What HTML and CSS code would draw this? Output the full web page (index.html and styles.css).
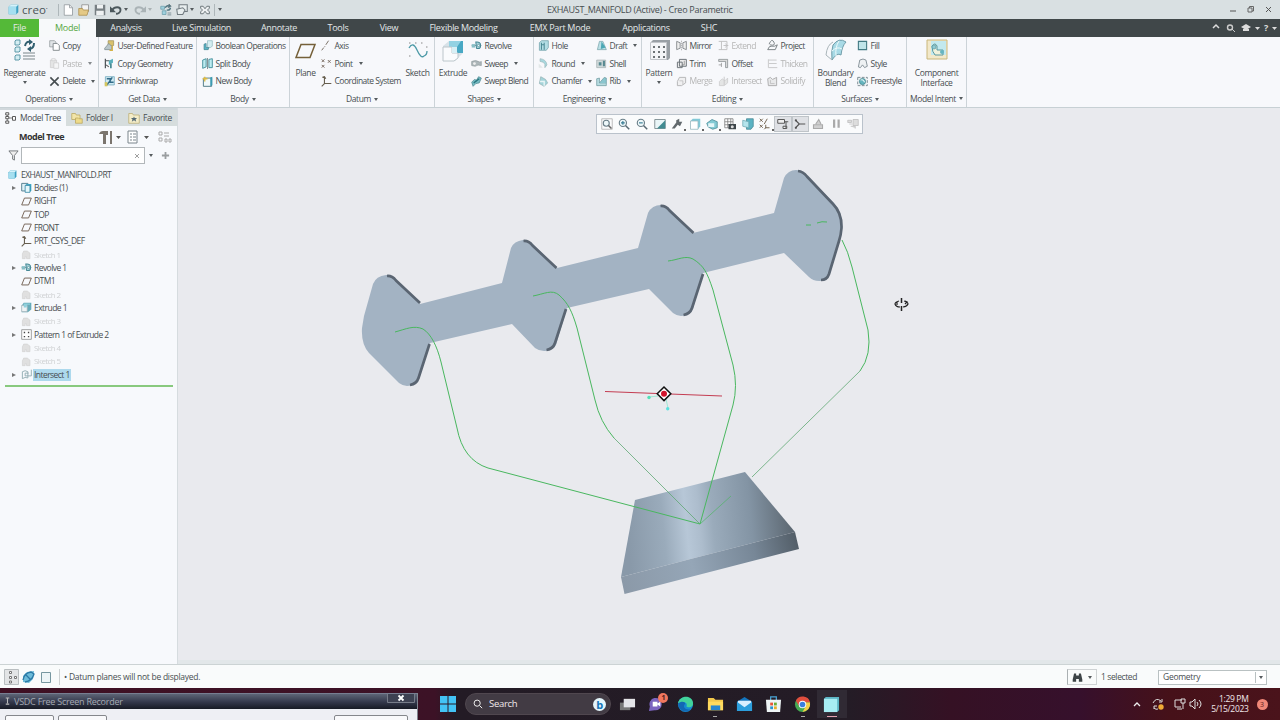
FILE: index.html
```html
<!DOCTYPE html>
<html lang="en">
<head>
<meta charset="utf-8">
<title>EXHAUST_MANIFOLD (Active) - Creo Parametric</title>
<link rel="stylesheet" href="styles.css">
</head>
<body>
<svg class="sprite" aria-hidden="true">
  <symbol id="cube" viewBox="0 0 16 16"><path d="M1 4l3-3h11v11l-3 3H1z" fill="#3c9fc2"/><path d="M1 4h11v11H1z" fill="#a5dff0"/><path d="M1 4l3-3h11l-3 3z" fill="#d5f3fb"/></symbol>
  <symbol id="page" viewBox="0 0 16 16"><path d="M3 1h7l4 4v10H3z" fill="#fff" stroke="#8b9296"/><path d="M10 1v4h4" fill="none" stroke="#8b9296"/></symbol>
  <symbol id="open" viewBox="0 0 16 16"><path d="M5 1h9v9H5z" fill="#f4f4f4" stroke="#888"/><path d="M1 6h5l1 2h7l-2 7H1z" fill="#e4c985" stroke="#a98c4b"/></symbol>
  <symbol id="save" viewBox="0 0 16 16"><path d="M1 1h14v14H1z" fill="#777f83"/><path d="M4 1h8v5H4zM3 9h10v6H3z" fill="#eef1f2"/></symbol>
  <symbol id="undo" viewBox="0 0 16 16"><path d="M3 8c3-5 11-5 11 0 0 3-3 5-6 5" fill="none" stroke="currentColor" stroke-width="2.500"/><path d="M0 3v8h8z" fill="currentColor"/></symbol>
  <symbol id="regensm" viewBox="0 0 16 16"><path d="M1 3h5v4H1zM3 9h5v5H3z" fill="#9fd1de" stroke="#6c9dab"/><path d="M7 5q2-4 6-2M14 5q-1 4-5 3" fill="none" stroke="#4f7480" stroke-width="1.800"/><path d="M12 0l3 3-4 2zM10 12h5M10 14.500h5" fill="#4f7480" stroke="#667b83"/></symbol>
  <symbol id="wins" viewBox="0 0 16 16"><path d="M4 1h11v9H4z" fill="#e8eeef" stroke="#717b80" stroke-width="1.400"/><path d="M1 7l8-2 3 3-3 6H2z" fill="#e8eeef" stroke="#717b80" stroke-width="1.400"/></symbol>
  <symbol id="closew" viewBox="0 0 16 16"><path d="M1 2h4l3 4 3-4h4v3l-3 3 3 3v3h-4l-3-4-3 4H1v-3l3-3-3-3z" fill="#eef1f2" stroke="#606a6e" stroke-width="1.400"/></symbol>
  <symbol id="copy" viewBox="0 0 16 16"><path d="M1 1h7l2 2v7H1z" fill="#e1e5e7" stroke="#8b9194"/><path d="M6 5h6l3 3v7H6z" fill="#fff" stroke="#7d8488" stroke-width="1.300"/></symbol>
  <symbol id="paste" viewBox="0 0 16 16"><path d="M2 3h9v11H2z" fill="#ddd" stroke="#b8b8b8"/><path d="M4 1h5v3H4zM7 7h7v8H7z" fill="#f4f4f4" stroke="#b8b8b8"/></symbol>
  <symbol id="del" viewBox="0 0 16 16"><path d="M2 2l12 12M14 2L2 14" stroke="#464d50" stroke-width="2.300"/></symbol>
  <symbol id="udf" viewBox="0 0 16 16"><path d="M6 1h8v7H6z" fill="#d8c16f" stroke="#9b8c54"/><path d="M1 12l6-7 4 4v5H1z" fill="#b9c6ca" stroke="#77868b"/><path d="M12 8v7H8" fill="none" stroke="#d4b244" stroke-width="2"/></symbol>
  <symbol id="cgeo" viewBox="0 0 16 16"><path d="M2 1v14M2 4h6" stroke="#50575a" stroke-width="1.800"/><path d="M7 4l6-3v6L7 10z" fill="#58aebb"/><path d="M10 8v7" stroke="#478a94" stroke-width="2.500"/><path d="M3 10l4 3" stroke="#555" stroke-width="1.500"/></symbol>
  <symbol id="shrink" viewBox="0 0 16 16"><path d="M2 1h13v12H2z" fill="#d1eaf2" stroke="#5d9db5"/><path d="M4 4h5v5h5M12 2L8 8M4 13l5-6" fill="none" stroke="#326c89" stroke-width="2"/><path d="M1 9h4v6H1z" fill="#d6c65d"/></symbol>
  <symbol id="bool" viewBox="0 0 16 16"><path d="M8 1h7v8l-3 2H8z" fill="#d5eef2" stroke="#8db7bf"/><path d="M3 6l3-1v6h4l-1 3H3z" fill="#5ab6c8" stroke="#45808d"/></symbol>
  <symbol id="split" viewBox="0 0 16 16"><path d="M1 3l5-2v12l-5 2zM10 2l5-1v13h-5z" fill="#bdebf0" stroke="#3b8b98" stroke-width="1.300"/><path d="M8 0v16" stroke="#4f6469"/></symbol>
  <symbol id="newb" viewBox="0 0 16 16"><path d="M2 3h12v12H2z" fill="#f0f8fa" stroke="#45727e" stroke-width="1.300"/><path d="M12 2l3-1v12l-3 2z" fill="#3d9bb1"/><path d="M1 4h7M4 1v7" stroke="#dfbb43" stroke-width="2"/></symbol>
  <symbol id="plane" viewBox="0 0 16 16"><path d="M5 3h10l-4 10H1z" fill="none" stroke="#766456" stroke-width="1.400"/></symbol>
  <symbol id="axis" viewBox="0 0 16 16"><path d="M11 1L7 7M6 9l-1 1M4 11l-3 4" stroke="#6d6256" stroke-width="1.300"/></symbol>
  <symbol id="point" viewBox="0 0 16 16"><path d="M1 2l4 4M5 2L1 6M10 3l4 4M14 3l-4 4M1 10l4 4M5 10l-4 4" stroke="#716256" stroke-width="1.300"/></symbol>
  <symbol id="csys" viewBox="0 0 16 16"><path d="M5 1v10h10M5 11l-4 4M2 2l3-1 2 3" fill="none" stroke="#665e4e" stroke-width="1.600"/></symbol>
  <symbol id="rev" viewBox="0 0 16 16"><path d="M1 8h14" stroke="#65797d" stroke-dasharray="3 1"/><path d="M1 6h5v5H1z" fill="#87bec6"/><path d="M7 3q7-1 7 5t-6 4z" fill="#a7d3da" stroke="#458895" stroke-width="1.500"/><circle cx="11" cy="8" r="1.700" fill="#f0f7f8" stroke="#458895"/></symbol>
  <symbol id="sweep" viewBox="0 0 16 16"><path d="M1 5q6-3 12 1l2-1v6q-5-2-9 1L1 11z" fill="#acb6b9" stroke="#909a9d"/><circle cx="5" cy="8" r="2" fill="#eee"/></symbol>
  <symbol id="swept" viewBox="0 0 16 16"><path d="M1 9l4-4 3 1 3-5 4 2-3 7-5 1-4 4z" fill="#79bdc6" stroke="#48838b"/><path d="M4 10l8-6" stroke="#28767e" stroke-width="2"/></symbol>
  <symbol id="hole" viewBox="0 0 16 16"><path d="M2 4l3-3h10v10l-3 4H2z" fill="#b3dde4" stroke="#679aa3"/><path d="M5 4v10M9 4v10M5 7h4" stroke="#4a8994" stroke-width="1.500"/></symbol>
  <symbol id="round" viewBox="0 0 16 16"><path d="M3 1q9 1 10 9l-3 4V9Q8 5 3 5z" fill="#a7d8df" stroke="#9bb7bb"/><path d="M1 8l6 6H1z" fill="#e2e7e7"/></symbol>
  <symbol id="chamfer" viewBox="0 0 16 16"><path d="M4 1l7 4 3 5-5 5-7-4z" fill="#a4d4da" stroke="#8fadb1"/><path d="M3 8h6v6" stroke="#e8f4f5" fill="none" stroke-width="2"/></symbol>
  <symbol id="draft" viewBox="0 0 16 16"><path d="M5 2h5l5 12H2z" fill="#bce0e6" stroke="#73a0a7"/><path d="M8 2l6 9-7 2z" fill="#4ba7b5"/></symbol>
  <symbol id="shell" viewBox="0 0 16 16"><path d="M1 3h13v11H1z" fill="#d0dadb" stroke="#a0acae"/><path d="M4 6h4v5H4zM10 4h3v8h-3z" fill="#578991"/></symbol>
  <symbol id="rib" viewBox="0 0 16 16"><path d="M1 4l4-1v7h10v4H1z" fill="#b7dce1" stroke="#67949b"/><path d="M5 10l7-8 3 1v7" fill="#8ac6cf" stroke="#67949b"/></symbol>
  <symbol id="mirror" viewBox="0 0 16 16"><path d="M1 2l5 2v8l-5 2zM15 2l-5 2v8l5 2z" fill="#eee" stroke="#8a8f92" stroke-width="1.400"/><path d="M8 1v14" stroke="#999" stroke-dasharray="2 1"/></symbol>
  <symbol id="trim" viewBox="0 0 16 16"><path d="M5 2h10v10H5zM2 6h7v8H2z" fill="#eee" stroke="#6b7378" stroke-width="1.400"/><path d="M12 4v6H9" stroke="#777" fill="none"/></symbol>
  <symbol id="merge" viewBox="0 0 16 16"><path d="M5 2h9v8L8 14H2V8z" fill="#eee" stroke="#999" stroke-width="1.400"/><path d="M5 7h5v5" fill="none" stroke="#999"/></symbol>
  <symbol id="extend" viewBox="0 0 16 16"><path d="M1 2h12v12H1M5 2v12M8 8h7" fill="none" stroke="#aaa" stroke-width="1.400"/><path d="M10 5l4 3-4 3" fill="none" stroke="#aaa"/></symbol>
  <symbol id="offset" viewBox="0 0 16 16"><path d="M1 2h13v12h-3V5H1z" fill="#ddd" stroke="#7a8184"/><path d="M1 10h4M5 7v6" stroke="#888"/></symbol>
  <symbol id="inter" viewBox="0 0 16 16"><path d="M2 8l4-4 4 3 4-4v7l-5 4H2z" fill="#ddd" stroke="#b5b5b5"/><path d="M9 1v12" stroke="#b5b5b5" stroke-width="1.400"/></symbol>
  <symbol id="project" viewBox="0 0 16 16"><path d="M3 6q4-9 7-3t-6 4M1 14q2-6 6-5t8-2l-3 7z" fill="none" stroke="#71797d" stroke-width="1.300"/></symbol>
  <symbol id="thicken" viewBox="0 0 16 16"><path d="M2 2v12h13M2 3h12M3 8h11" fill="none" stroke="#b4b4b4" stroke-width="1.400"/></symbol>
  <symbol id="solid" viewBox="0 0 16 16"><path d="M1 4l4-2 3 3 6-3v12H2z" fill="#e3e3e3" stroke="#888" stroke-width="1.300"/><path d="M5 6v5h6" fill="none" stroke="#999"/></symbol>
  <symbol id="fill" viewBox="0 0 16 16"><path d="M2 2h12v12H2z" fill="#bfe4e9" stroke="#427983" stroke-width="1.600"/></symbol>
  <symbol id="style" viewBox="0 0 16 16"><path d="M2 13l2-10q5-3 9 0l2 9-4 2-3-4-3 4z" fill="#eef1f3" stroke="#7f8b93" stroke-width="1.300"/></symbol>
  <symbol id="free" viewBox="0 0 16 16"><path d="M1 2h14v12H1z" fill="#eef3f4" stroke="#75858c" stroke-width="1.300" stroke-dasharray="4 2"/><circle cx="8" cy="8" r="4.500" fill="#65b5bf" stroke="#387a83"/><path d="M5 6q4-2 6 3" fill="none" stroke="#e8f5f6" stroke-width="1.500"/></symbol>
  <symbol id="bodies" viewBox="0 0 16 16"><path d="M1 2h9v11H1z" fill="#dff1f7" stroke="#547f91" stroke-width="1.400"/><path d="M6 5l2-2h7v9l-2 3H6z" fill="#3fa6c6"/><path d="M6 5h7v10H6z" fill="#e4f7fb" stroke="#277a99"/></symbol>
  <symbol id="ghost" viewBox="0 0 16 16"><path d="M2 7l2-4h5l4 3v8H8v-3H6v3H2z" fill="#e0e0e0" stroke="#d2d2d2"/></symbol>
  <symbol id="extr" viewBox="0 0 16 16"><path d="M4 1h11v10l-5 4H1V5z" fill="#66aab8"/><path d="M1 5h8v9H1z" fill="#eef3f5" stroke="#a5b2b7"/><path d="M4 2h9v2H9l-1 4H4z" fill="#8fd0dc"/></symbol>
  <symbol id="patt" viewBox="0 0 16 16"><path d="M1 1h14v14H1z" fill="#fff" stroke="#777"/><path d="M4 4h2v2H4zM10 4h2v2h-2zM4 10h2v2H4zM10 10h2v2h-2z" fill="#444"/></symbol>
  <symbol id="isect" viewBox="0 0 16 16"><path d="M2 4q4-3 8 0v9q-4-2-8 1zM15 1v9H6V6h5" fill="none" stroke="#8faab0" stroke-width="1.300"/></symbol>
  <symbol id="treei" viewBox="0 0 16 16"><path d="M3 3v10M5 8h5" stroke="#555"/><path d="M1 1h4v3H1zM1 6h4v3H1zM1 12h4v3H1zM10 6h4v5h-4z" fill="#fff" stroke="#555" stroke-width="1.300"/></symbol>
  <symbol id="folder" viewBox="0 0 16 16"><path d="M1 2h5l1 2h5v6H1z" fill="#f2e5a8" stroke="#b9a55c"/><path d="M6 8h4l1 1h4v6H6z" fill="#eedb8a" stroke="#b9a55c"/></symbol>
  <symbol id="fav" viewBox="0 0 16 16"><path d="M1 2h5l1 2h8v11H1z" fill="#f4edc9" stroke="#b9ab72"/><path d="M8 6l1 2h3l-2 2 1 3-3-2-3 2 1-3-2-2h3z" fill="#556a75"/></symbol>
  <symbol id="lens" viewBox="0 0 16 16"><circle cx="6.500" cy="6.500" r="4.800" fill="#eef8fa" stroke="#687d87" stroke-width="1.500"/><path d="M10 10l5 5" stroke="#596a73" stroke-width="2"/></symbol>
  <symbol id="repaint" viewBox="0 0 16 16"><path d="M1 2h14v12H1z" fill="#eaf6f8" stroke="#65777c"/><path d="M15 3v11H4z" fill="#418b91"/></symbol>
  <symbol id="wrench" viewBox="0 0 16 16"><path d="M1 14l6-8 0-3 4-2 0 4 4 0-3 6-3-2-4 5z" fill="#62696d"/></symbol>
  <symbol id="views" viewBox="0 0 16 16"><path d="M1 7l7-5 7 3v8l-6 2-6-3z" fill="#83cad4" stroke="#468692"/><path d="M3 7h8v5H3z" fill="#e4f6f8"/></symbol>
  <symbol id="layers" viewBox="0 0 16 16"><path d="M6 1h9v10l-3 4H6z" fill="#5bb3c3" stroke="#468692"/><path d="M1 3l8 2v8l-8-2z" fill="#b4e4ec" stroke="#6da8b3"/></symbol>
  <symbol id="camera" viewBox="0 0 16 16"><path d="M1 1h11v12H1zM1 5h11M1 9h11M5 1v12M9 1v12" fill="#fff" stroke="#777"/><path d="M6 8h10v7H6z" fill="#3e464a"/><circle cx="11" cy="11.500" r="2" fill="#ddd"/></symbol>
</svg>

<div class="app">
  <header class="title">
    <svg class="logo"><use href="#cube"/></svg><span class="brand">creo<sup>•</sup></span><i class="vsep"></i>
    <div class="quick">
      <svg><use href="#page"/></svg><svg><use href="#open"/></svg><svg><use href="#save"/></svg>
      <svg class="dk"><use href="#undo"/></svg><i class="arr"></i>
      <svg class="redo"><use href="#undo"/></svg><i class="arr dim"></i>
      <svg><use href="#regensm"/></svg><svg><use href="#wins"/></svg><i class="arr"></i><svg class="cl"><use href="#closew"/></svg><i class="vsep"></i><i class="arr"></i>
    </div>
    <span class="caption">EXHAUST_MANIFOLD (Active) - Creo Parametric</span>
    <svg class="winbtns" viewBox="0 0 54 18"><path d="M4 10h6" stroke="#555"/><path d="M22 7h4v4h-4zM23.500 7V5.500h4V10H26" fill="none" stroke="#666"/><path d="M40 6l5 5M45 6l-5 5" stroke="#555"/></svg>
  </header>

  <nav class="tabs">
    <span class="file">File</span><span class="on">Model</span><span>Analysis</span><span>Live Simulation</span><span>Annotate</span><span>Tools</span><span>View</span><span>Flexible Modeling</span><span>EMX Part Mode</span><span>Applications</span><span>SHC</span>
    <svg class="help" viewBox="0 0 76 18"><path d="M9 9l3-3 3 3" fill="none" stroke="#ddd" stroke-width="1.500"/><circle cx="26" cy="8.500" r="2.500" fill="none" stroke="#ccc" stroke-width="1.400"/><path d="M28 10l3 3" stroke="#ccc"/><path d="M37 8l5-3 5 3-5 3z" fill="#ddd"/><path d="M39 10v2h6v-2" fill="#ddd"/><path d="M51 8h5l-2.500 3z" fill="#ddd"/><text x="60" y="12" font-size="9" font-weight="bold" fill="#ddd">?</text><path d="M68 8h5l-2.500 3z" fill="#ddd"/></svg>
  </nav>

  <section class="ribbon">
    <div class="group ops"><div class="cols">
      <div class="big"><svg viewBox="0 0 30 26"><path d="M5 3l1-1h4v4l-1 1H5zM5 10l1-1h4v4l-1 1H5zM5 18l1-1h4v4l-1 1H5z" fill="#d5eef3" stroke="#5f9aa9"/><path d="M13 15h12M13 18h12M13 21h12" stroke="#7b8589"/><path d="M15 8q1-5 5-4M24 5q0 5-4 6" fill="none" stroke="#315f70" stroke-width="2"/><path d="M19 1l4 3-4 3zM21 8v6l-4-3z" fill="#315f70"/></svg><span>Regenerate</span><i class="arr"></i></div>
      <div class="col"><div class="cmd"><svg><use href="#copy"/></svg>Copy</div><div class="cmd off"><svg><use href="#paste"/></svg><b>Paste</b><i class="arr"></i></div><div class="cmd"><svg><use href="#del"/></svg>Delete<i class="arr"></i></div></div>
    </div><div class="label">Operations<i class="arr"></i></div></div>

    <div class="group getd"><div class="cols"><div class="col"><div class="cmd"><svg><use href="#udf"/></svg>User-Defined Feature</div><div class="cmd"><svg><use href="#cgeo"/></svg>Copy Geometry</div><div class="cmd"><svg><use href="#shrink"/></svg>Shrinkwrap</div></div></div><div class="label">Get Data<i class="arr"></i></div></div>

    <div class="group bod"><div class="cols"><div class="col"><div class="cmd"><svg><use href="#bool"/></svg>Boolean Operations</div><div class="cmd"><svg><use href="#split"/></svg>Split Body</div><div class="cmd"><svg><use href="#newb"/></svg>New Body</div></div></div><div class="label">Body<i class="arr"></i></div></div>

    <div class="group dat"><div class="cols">
      <div class="big"><svg viewBox="0 0 30 26"><path d="M10 6.500h14l-5 13H5z" fill="none" stroke="#756039" stroke-width="1.500"/></svg><span>Plane</span></div>
      <div class="col"><div class="cmd"><svg><use href="#axis"/></svg>Axis</div><div class="cmd"><svg><use href="#point"/></svg>Point<i class="arr"></i></div><div class="cmd"><svg><use href="#csys"/></svg>Coordinate System</div></div>
      <div class="big"><svg viewBox="0 0 30 26"><path d="M6 10q4-7 8 2t7 6q3-1 3-5" fill="none" stroke="#4d9aa7" stroke-width="1.300"/><path d="M6 5h1.500M12 5h1.500M18 5h1.500M6 18h1.500M23 9h1.500" stroke="#888"/></svg><span>Sketch</span></div>
    </div><div class="label">Datum<i class="arr"></i></div></div>

    <div class="group shp"><div class="cols">
      <div class="big"><svg viewBox="0 0 30 26"><path d="M5 8l6-5h14v12l-8 8H5z" fill="#d8e2e8"/><path d="M11 3h14v12h-6V9h-8z" fill="#48a8c4"/><path d="M11 3h12l-4 6h-8z" fill="#93d2e3"/><path d="M5 9h9v6h6v5l-4 3H5z" fill="#fafbfd" stroke="#bcc6cb"/><path d="M14 9h5v6h-5z" fill="#d8eff5"/></svg><span>Extrude</span></div>
      <div class="col"><div class="cmd"><svg><use href="#rev"/></svg>Revolve</div><div class="cmd"><svg><use href="#sweep"/></svg>Sweep<i class="arr"></i></div><div class="cmd"><svg><use href="#swept"/></svg>Swept Blend</div></div>
    </div><div class="label">Shapes<i class="arr"></i></div></div>

    <div class="group eng"><div class="cols">
      <div class="col"><div class="cmd"><svg><use href="#hole"/></svg>Hole</div><div class="cmd"><svg><use href="#round"/></svg>Round<i class="arr"></i></div><div class="cmd"><svg><use href="#chamfer"/></svg>Chamfer<i class="arr"></i></div></div>
      <div class="col"><div class="cmd"><svg><use href="#draft"/></svg>Draft<i class="arr"></i></div><div class="cmd"><svg><use href="#shell"/></svg>Shell</div><div class="cmd"><svg><use href="#rib"/></svg>Rib<i class="arr"></i></div></div>
    </div><div class="label">Engineering<i class="arr"></i></div></div>

    <div class="group edi"><div class="cols">
      <div class="big"><svg viewBox="0 0 30 26"><path d="M7 4l2-2h17v18l-2 2H7z" fill="#999fa5"/><path d="M6.500 4.500h16v17h-16z" fill="#f4f5f8" stroke="#c2c5ca"/><path d="M9 8h2v2H9zM14 8h2v2h-2zM19 8h2v2h-2zM9 13h2v2H9zM14 13h2v2h-2zM19 13h2v2h-2zM9 18h2v2H9zM14 18h2v2h-2zM19 18h2v2h-2z" fill="#6d7276"/></svg><span>Pattern</span><i class="arr"></i></div>
      <div class="col"><div class="cmd"><svg><use href="#mirror"/></svg>Mirror</div><div class="cmd"><svg><use href="#trim"/></svg>Trim</div><div class="cmd off"><svg><use href="#merge"/></svg><b>Merge</b></div></div>
      <div class="col"><div class="cmd off"><svg><use href="#extend"/></svg><b>Extend</b></div><div class="cmd"><svg><use href="#offset"/></svg>Offset</div><div class="cmd off"><svg><use href="#inter"/></svg><b>Intersect</b></div></div>
      <div class="col"><div class="cmd"><svg><use href="#project"/></svg>Project</div><div class="cmd off"><svg><use href="#thicken"/></svg><b>Thicken</b></div><div class="cmd off"><svg><use href="#solid"/></svg><b>Solidify</b></div></div>
    </div><div class="label">Editing<i class="arr"></i></div></div>

    <div class="group sur"><div class="cols">
      <div class="big"><svg viewBox="0 0 30 26"><path d="M12 7q6-8 13-3-4 4-5 13-4-3-9 5-1-9 1-15z" fill="#a8dae6" stroke="#719eaa"/><path d="M18 3q-4 6-3 15M11 13q5-5 10-2" stroke="#eefafb" fill="none"/><path d="M12 4q-6 3-7 13M5 17l6 5" fill="none" stroke="#aab5ba"/></svg><span>Boundary<br>Blend</span></div>
      <div class="col"><div class="cmd"><svg><use href="#fill"/></svg>Fill</div><div class="cmd"><svg><use href="#style"/></svg>Style</div><div class="cmd"><svg><use href="#free"/></svg>Freestyle</div></div>
    </div><div class="label">Surfaces<i class="arr"></i></div></div>

    <div class="group mod"><div class="cols">
      <div class="big"><svg viewBox="0 0 30 26"><path d="M5 2h20v19H5z" fill="#f2e8c9" stroke="#c9b67a"/><path d="M9 3h15v14H9z" fill="#c3e9ee"/><path d="M10 8q3-4 5 0v4h6v5h-8q-3-3-3-9z" fill="#f0f1db" stroke="#5898a0"/><circle cx="12" cy="9" r="2" fill="#8ecbd3" stroke="#5898a0" stroke-width=".7"/><circle cx="20" cy="14" r="2" fill="#65b5c2"/></svg><span>Component<br>Interface</span></div>
    </div><div class="label">Model Intent<i class="arr"></i></div></div>
  </section>

  <main class="work">
    <aside class="side">
      <div class="sidetabs"><span class="on"><svg><use href="#treei"/></svg>Model Tree</span><span><svg><use href="#folder"/></svg>Folder I</span><span><svg><use href="#fav"/></svg>Favorite</span></div>
      <div class="treehead"><strong>Model Tree</strong>
        <svg viewBox="0 0 76 16"><path d="M0 5q1-3 4-3h5v4H7v9H4V5zM11 2h2v13h-2z" fill="#7b756e"/><path d="M17 7h5l-2.500 3zM45 7h5l-2.500 3z" fill="#555"/><path d="M29 2h9v12h-9zM31 5h2M34 5h3M31 8h2M34 8h3M31 11h2M34 11h3" fill="#fff" stroke="#7b858c"/><path d="M60 3h3v3h-3zM60 9h3v3h-3zM65 4h5M65 7h5M66 10h2v3h-2zM70 10h2v3h-2z" fill="none" stroke="#aaa"/></svg>
      </div>
      <div class="filter"><svg viewBox="0 0 12 12"><path d="M1 1h10L7 6v5l-2-1V6z" fill="#eee" stroke="#6f7477"/></svg><div class="input"><svg viewBox="0 0 6 6"><path d="M1 1l4 4M5 1L1 5" stroke="#888" stroke-width=".8"/></svg></div><i class="arr"></i><svg class="plus" viewBox="0 0 10 10"><path d="M5 1v8M1 5h8" stroke="#9a9ea0" stroke-width="2"/></svg></div>
      <ul class="tree">
        <li class="root"><svg><use href="#cube"/></svg><span>EXHAUST_MANIFOLD.PRT</span></li>
        <li class="exp"><svg><use href="#bodies"/></svg><span>Bodies (1)</span></li>
        <li><svg><use href="#plane"/></svg><span>RIGHT</span></li>
        <li><svg><use href="#plane"/></svg><span>TOP</span></li>
        <li><svg><use href="#plane"/></svg><span>FRONT</span></li>
        <li><svg><use href="#csys"/></svg><span>PRT_CSYS_DEF</span></li>
        <li class="gone"><svg><use href="#ghost"/></svg><span>Sketch 1</span></li>
        <li class="exp"><svg><use href="#rev"/></svg><span>Revolve 1</span></li>
        <li><svg><use href="#plane"/></svg><span>DTM1</span></li>
        <li class="gone"><svg><use href="#ghost"/></svg><span>Sketch 2</span></li>
        <li class="exp"><svg><use href="#extr"/></svg><span>Extrude 1</span></li>
        <li class="gone"><svg><use href="#ghost"/></svg><span>Sketch 3</span></li>
        <li class="exp"><svg><use href="#patt"/></svg><span>Pattern 1 of Extrude 2</span></li>
        <li class="gone"><svg><use href="#ghost"/></svg><span>Sketch 4</span></li>
        <li class="gone"><svg><use href="#ghost"/></svg><span>Sketch 5</span></li>
        <li class="exp sel"><svg><use href="#isect"/></svg><span>Intersect 1</span></li>
      </ul>
      <div class="insert"></div>
    </aside>

    <section class="view">
      <svg class="scene" viewBox="178 108 1102 556">
        <defs>
          <linearGradient id="cone" gradientUnits="userSpaceOnUse" x1="627" y1="530" x2="792" y2="514"><stop offset="0" stop-color="#8999a9"/><stop offset=".22" stop-color="#9aabbb"/><stop offset=".36" stop-color="#b7c7d7"/><stop offset=".44" stop-color="#adbdcd"/><stop offset=".52" stop-color="#9aabbb"/><stop offset=".75" stop-color="#8394a4"/><stop offset="1" stop-color="#5c6771"/></linearGradient>
          <linearGradient id="rim" gradientUnits="userSpaceOnUse" x1="622" y1="585" x2="798" y2="540"><stop offset="0" stop-color="#8b99a8"/><stop offset=".4" stop-color="#95a6b7"/><stop offset=".75" stop-color="#778797"/><stop offset="1" stop-color="#525d67"/></linearGradient>
          <g id="edge"><path d="M387 276Q392 275.500 396 280.500L420 303"/><path d="M429.500 344L418.500 378Q416.500 384 410 385"/></g>
        </defs>
        <path fill="#a3b3c3" d="M362 328L364 316 373 284Q376 276 386 275 391 275 395 279L420 304 502 283 511 248Q514 241 523 240 529 240 533 244L557 268 638 248 648 213Q652 205 661 205 666 205 670 209L693 233 774 213 784 178Q788 170 796 170 801 170 805 174L834 203Q842 212 842 224 842 231 840 238L829 275Q827 281 819 281 813 281 809 277L784 253 703 273 693 309Q690 316 681 316 677 316 673 313L649 289 567 308 556 345Q553 351 544 351 539 351 535 348L512 324 430 343 419 379Q416 386 407 386 403 386 399 383L369 353Q361 344 362 328Z"/>
        <g fill="none" stroke="#5a6572" stroke-width="2.700"><use href="#edge"/><use href="#edge" x="136.500" y="-35"/><use href="#edge" x="273.500" y="-70"/><path d="M798 171Q803 171.500 807 176.500L833 204Q842 213 841.500 228 841 235 839 241L829 274Q827 280 821 280"/></g>
        <path d="M635 500L745 472 795 532 621 577Z" fill="url(#cone)"/>
        <path d="M621 577L795 532 799 549 624.500 594Z" fill="url(#rim)"/>
        <g fill="none" stroke="#49b75f" stroke-width="1">
          <path d="M395 332C406 329 414 325 423 329 431 334 437 346 441 362L457 428Q463 460 488 468L700 524"/>
          <path d="M533 296C544 294 552 289 559 295 568 303 572 311 577 328L595 400Q600 422 614 438"/>
          <path d="M614 438L700 524" stroke="#5fa873" stroke-width=".8"/>
          <path d="M668 261C678 260 685 255 693 259 704 266 707 272 713 290L733 365Q738 386 733 405L700 524"/>
          <path d="M806 225h5M817 223q5-2 10-1M842 240Q848 251 852 267L868 330Q872 355 860 371"/>
          <path d="M860 371L752 477" stroke="#5fa873" stroke-width=".8"/>
          <path d="M731 496L700 524" stroke-opacity=".65"/>
        </g>
        <path d="M605 391.500L722 396" stroke="#c43d52"/>
        <path d="M658 396l-9 1M666 399l2 9" stroke="#a1e8d5"/><circle cx="649" cy="397.500" r="1.700" fill="#55dfb6"/><circle cx="667.700" cy="408.700" r="1.700" fill="#5de2df"/>
        <path d="M664 387l6.800 6.800-6.800 6.800-6.800-6.800z" fill="#fff" stroke="#111" stroke-width="1.500"/><circle cx="664" cy="393.800" r="3" fill="#d2142c"/>
        <g fill="none" stroke="#222" stroke-width="1.200"><path d="M901.500 298v5M901.500 306v5" stroke-width="1.500"/><path d="M899 301q-4 1-4 3 1 3 5 3M904 301q4 1 4 3-1 2.500-5 3M897 302v3M905 304l2-2-2-1"/></g>
      </svg>
      <div class="viewbar">
        <span><svg viewBox="0 0 16 16"><path d="M1 1h14v14H1z" fill="none" stroke="#aaa"/><circle cx="7" cy="7" r="4" fill="#eef8fa" stroke="#687d87" stroke-width="1.500"/><path d="M10 10l4 4" stroke="#666" stroke-width="2"/></svg></span>
        <span><svg viewBox="0 0 16 16"><use href="#lens"/><path d="M4 6.500h5M6.500 4v5" stroke="#367a92" stroke-width="1.500"/></svg></span>
        <span><svg viewBox="0 0 16 16"><use href="#lens"/><path d="M4 6.500h5" stroke="#367a92" stroke-width="1.500"/></svg></span>
        <span><svg><use href="#repaint"/></svg></span><span class="more"><svg><use href="#wrench"/></svg></span>
        <span class="more"><svg viewBox="0 0 16 16"><path d="M2 4l3-3h10v10l-3 4H2z" fill="#82c9d7"/><path d="M2 4h10v11H2z" fill="#fff" stroke="#9cb7be"/></svg></span><span class="more"><svg><use href="#views"/></svg></span><span><svg><use href="#camera"/></svg></span><span><svg><use href="#layers"/></svg></span>
        <span class="more"><svg viewBox="0 0 16 16"><path d="M1 1l4 4M5 1L1 5M11 1L7 8M8 13h6M9 9v4l-2 2M1 9l4 4M5 9l-4 4" fill="none" stroke="#756653" stroke-width="1.300"/></svg></span>
        <span class="down"><svg viewBox="0 0 16 16"><path d="M1 2h9v5H1zM10 5h5M12 5v9M8 11h5v3H8z" fill="#eee" stroke="#555" stroke-width="1.300"/></svg></span>
        <span class="down"><svg viewBox="0 0 16 16"><path d="M2 3l5 5h8M7 8l-5 5" fill="none" stroke="#555" stroke-width="1.500"/><circle cx="2.500" cy="3" r="1.500" fill="#555"/><circle cx="2.500" cy="13" r="1.500" fill="#555"/></svg></span>
        <span><svg viewBox="0 0 16 16"><path d="M2 9h12v5H2zM5 8l4-6 3 6" fill="#d0d0d0" stroke="#aaa" stroke-width="1.500"/></svg></span>
        <span><svg viewBox="0 0 16 16"><path d="M4 2h3v11H4zM10 2h3v11h-3z" fill="#aaa"/></svg></span>
        <span><svg viewBox="0 0 16 16"><path d="M1 3h5v3H1zM8 2h7v8H8zM3 8h4M5 11h6v3" fill="#ddd" stroke="#bbb"/></svg></span>
      </div>
    </section>
  </main>

  <footer class="status">
    <svg class="sicons" viewBox="0 0 60 24"><path d="M4.500 4.500h14v15h-14z" fill="#e3e5e6" stroke="#b9bec0"/><path d="M9.500 6.500h2v2h-2zM9.500 11.500h2v2h-2zM9.500 16h2v2h-2zM14.500 11.500h2v2h-2z" fill="#fff" stroke="#777"/><path d="M23 11l4-4 7-1-1 8-4 4-6-1z" fill="#6cbbd9"/><path d="M23 15q1-7 8-8l3 2q-2 7-9 8M25 9l6 6" fill="none" stroke="#2b79a5" stroke-width="1.300"/><path d="M41.500 7.500h9v10h-9z" fill="#edf5f7" stroke="#7797a0"/><path d="M59.500 4v16" stroke="#cdd1d2"/></svg>
    <span class="message">•&nbsp;Datum planes will not be displayed.</span>
    <div class="finder"><svg viewBox="0 0 16 16"><path d="M3 2h3v3h4V2h3l2 9v3h-5v-4H6v4H1v-3z" fill="#3d4447"/></svg><i class="arr"></i></div>
    <span class="selected">1 selected</span>
    <div class="select"><span>Geometry</span><div class="drop"><i class="arr"></i></div></div>
  </footer>

  <div class="taskbar">
    <svg class="start" viewBox="0 0 16 16"><path d="M0 0h7.500v7.500H0zM8.500 0H16v7.500H8.500zM0 8.500h7.500V16H0zM8.500 8.500H16V16H8.500z" fill="#43c3f5"/></svg>
    <div class="search"><svg viewBox="0 0 12 12"><circle cx="5" cy="5" r="3.700" fill="none" stroke="#eee" stroke-width="1.200"/><path d="M8 8l3 3" stroke="#eee" stroke-width="1.200"/></svg><span>Search</span><em>b</em></div>
    <div class="apps">
      <span><svg viewBox="0 0 18 18"><path d="M1 7h11v8H1z" fill="#777"/><path d="M5 3h12v9H5z" fill="#e4e4e8"/></svg></span>
      <span class="chat"><svg viewBox="0 0 18 18"><path d="M1 16l1-5a6.500 6.500 0 1 1 5 4z" fill="#7c64bf"/><path d="M5 6h5v5H5zM10 8l3-2v5l-3-2z" fill="#fff"/></svg><b>1</b></span>
      <span><svg viewBox="0 0 18 18"><circle cx="9" cy="9" r="8" fill="#168bd1"/><path d="M1 8C3-2 17-1 17 8c0 4-4 5-7 3 2-5-5-6-9-3z" fill="#42d39b"/><path d="M1 8c5-4 9-1 7 1-2 3 1 6 6 5-4 5-12 2-13-6z" fill="#1268b4"/></svg></span>
      <span class="run"><svg viewBox="0 0 18 18"><path d="M1 2h6l2 2h8v11H1z" fill="#f3c84b"/><path d="M1 6h16v9H1z" fill="#ffda5e"/><path d="M4 10h10v5H4z" fill="#2786cf"/></svg></span>
      <span><svg viewBox="0 0 18 18"><path d="M1 6l8-5 8 5v10H1z" fill="#1475bd"/><path d="M2 5h14v8H2z" fill="#d8efff"/><path d="M1 6l8 6 8-6v10H1z" fill="#2c9edc"/></svg></span>
      <span><svg viewBox="0 0 18 18"><path d="M6 5V1h6v4" fill="none" stroke="#4aa6d8" stroke-width="1.300"/><path d="M1 4h16l-1 13H2z" fill="#eef4f5"/><path d="M5.500 7h3v3h-3z" fill="#e75537"/><path d="M9.500 7h3v3h-3z" fill="#69ad37"/><path d="M5.500 11h3v3h-3z" fill="#2994d0"/><path d="M9.500 11h3v3h-3z" fill="#e8ad2c"/></svg></span>
      <span class="run"><svg viewBox="0 0 18 18"><circle cx="9" cy="9" r="8" fill="#45a952"/><path d="M2 5a8 8 0 0 1 15 2H9L5 10z" fill="#e14e3e"/><path d="M9 7h8q1 8-8 10l4-7z" fill="#f5cd48"/><circle cx="9" cy="9" r="4" fill="#fff"/><circle cx="9" cy="9" r="3" fill="#397fdf"/></svg></span>
      <span class="active"><svg viewBox="0 0 18 18"><path d="M1 3l2-2h14v14l-2 2H1z" fill="#5db7c6"/><path d="M1 3h14v14H1z" fill="#a7edf3"/></svg></span>
    </div>
    <svg class="tray" viewBox="0 0 76 20"><path d="M2 12l3-3 3 3" fill="none" stroke="#eee" stroke-width="1.300"/><path d="M21 9q3-6 8-2M30 5v3h-3M22 15v-3h3M22 14q2 2 4 1" fill="none" stroke="#ddd"/><circle cx="29" cy="13" r="2.700" fill="#efab35"/><path d="M50 6h-7v7h6M45 15h5M49 5h4v4h-4zM51 9v6" fill="none" stroke="#ddd"/><path d="M58 8h2l3-3v10l-3-3h-2zM65 8q2 2 0 4M67 6q4 4 0 8" fill="none" stroke="#ddd"/></svg>
    <div class="clock">1:29 PM<br>5/15/2023</div><span class="notify">3</span>

    <div class="recorder"><div class="rtitle"><svg viewBox="0 0 8 10"><path d="M2 1h4M4 1v6M2 8h4" stroke="#bbb" stroke-width="1.200"/></svg><span>VSDC Free Screen Recorder</span><svg class="x" viewBox="0 0 28 10"><path d="M.5 0v8.500h27V0" fill="#3d4152" stroke="#777c89"/><path d="M11.500 1.500l5 5M16.500 1.500l-5 5" stroke="#fff" stroke-width="1.800"/></svg></div><div class="rbody"><i></i><i></i><i class="wide"></i></div></div>
  </div>
</div>
</body>
</html>
```

FILE: styles.css
```css
* { box-sizing: border-box; }
body { margin: 0; width: 1280px; height: 720px; overflow: hidden; background: #e9eaee; color: #484e51; font: 8.5px/12px "Open Sans", "Noto Sans", sans-serif; letter-spacing: -.5px; }
.sprite { position: absolute; width: 0; height: 0; }
svg { display: block; flex: none; }
.app { display: grid; grid-template-rows: 19px 18px 71px 556px 24px 32px; height: 720px; }
.arr { display: inline-block; flex: none; width: 0; height: 0; border: 2.5px solid transparent; border-top: 3px solid #555b5e; border-bottom: 0; }
.dim { opacity: .35; }

.title { display: grid; grid-template-columns: 22px 36px 3px 183px 1fr 54px; align-items: center; background: #d9e0e2; }
.logo { width: 11px; height: 11px; margin-left: 8px; }
.brand { font: 11.5px/16px "Open Sans", sans-serif; letter-spacing: .1px; color: #4c5559; }
.brand sup { font-size: 4px; vertical-align: 4px; }
.vsep { width: 1px; height: 12px; background: #aeb7ba; }
.quick { display: flex; align-items: center; }
.quick svg { width: 12px; height: 12px; margin-right: 4px; }
.quick svg:first-child { margin-left: 1px; }
.quick .arr { margin: 0 6px 0 1px; }
.quick .dk { color: #4b575c; margin-right: 1px; }
.quick .redo { color: #aab3b6; transform: scaleX(-1); margin-right: 1px; }
.quick .redo + .arr { margin-right: 8px; }
.quick svg:nth-of-type(7) { margin-right: 1px; }
.quick .cl { width: 10px; height: 10px; }
.quick .vsep { margin-right: 2px; }
.quick .vsep + .arr { margin-right: 0; }
.caption { padding-left: 303px; font-size: 9px; letter-spacing: -.27px; white-space: nowrap; }
.winbtns { width: 54px; height: 18px; }

.tabs { display: grid; grid-template-columns: 39px 57px 60px 91px 64px 54px 48px 101px 92px 80px 46px 1fr; background: #404749; color: #e4e8e9; font-size: 9px; line-height: 18px; text-align: center; letter-spacing: -.3px; white-space: nowrap; }
.tabs .file { background: #54b938; }
.tabs .on { background: #f7f9fa; color: #56a741; }
.help { width: 76px; height: 18px; justify-self: end; }

.ribbon { display: flex; background: #f7f8fb; border-bottom: 1px solid #c7d0d4; }
.group { display: flex; flex-direction: column; border-right: 1px solid #ccd3d8; white-space: nowrap; }
.cols { display: grid; height: 53px; }
.col { display: flex; flex-direction: column; }
.cmd { display: flex; align-items: center; height: 17.7px; }
.cmd svg { width: 11px; height: 11px; margin-right: 2.5px; }
.cmd .arr { margin-left: 6px; }
.off { color: #b5b5b5; }
.off svg, .off .arr { opacity: .7; }
.off b { font-weight: 400; filter: blur(.6px); }
.label { display: flex; align-items: center; justify-content: center; height: 17px; letter-spacing: -.4px; }
.ribbon .label { margin-top: 1px; }
.label .arr { margin-left: 3px; }
.big { display: flex; flex-direction: column; align-items: center; text-align: center; line-height: 10px; padding-top: 1px; letter-spacing: -.35px; }
.big svg { width: 30px; height: 26px; margin-bottom: 4px; }
.big .arr { margin-top: 3px; }
.ops { width: 99px; } .ops .cols { grid-template-columns: 49px 1fr; }
.getd { width: 98px; } .getd .col { padding-left: 5px; }
.bod { width: 93px; } .bod .col { padding-left: 5px; }
.dat { width: 145px; } .dat .cols { grid-template-columns: 31px 80px 33px; }
.shp { width: 99px; } .shp .cols { grid-template-columns: 36px 1fr; }
.eng { width: 108px; } .eng .cols { grid-template-columns: 58px 1fr; padding-left: 4px; }
.edi { width: 172px; } .edi .cols { grid-template-columns: 34px 42px 49px 1fr; }
.sur { width: 93px; } .sur .cols { grid-template-columns: 43px 1fr; }
.mod { width: 60px; }

.work { display: grid; grid-template-columns: 178px 1102px; }
.side { background: #f7f9fc; border-right: 1px solid #d6dcdf; }
.sidetabs { display: grid; grid-template-columns: 66px 57px 1fr; height: 18px; background: #d6dddd; border-top: 2px solid #d1d8dc; white-space: nowrap; letter-spacing: -.38px; }
.sidetabs span { display: flex; align-items: center; padding-left: 5px; overflow: hidden; }
.sidetabs .on { background: #f7f9fc; }
.sidetabs svg { width: 12px; height: 12px; margin-right: 3px; }
.treehead { display: flex; align-items: center; height: 21px; padding-left: 19px; }
.treehead strong { width: 80px; font-size: 9px; letter-spacing: -.5px; color: #333; }
.treehead svg { width: 76px; height: 16px; }
.filter { display: flex; align-items: center; height: 17px; padding-left: 8px; }
.filter > svg { width: 11px; height: 11px; }
.input { display: flex; align-items: center; justify-content: flex-end; width: 124px; height: 17px; margin: 0 4px 0 2px; padding-right: 4px; border: 1px solid #b2b7ba; background: #fff; }
.input svg { width: 6px; height: 6px; }
.filter .plus { width: 9px; height: 9px; margin-left: 8px; }
.tree { margin: 0; padding: 4px 0 0; list-style: none; }
.tree li { display: flex; align-items: center; height: 13.33px; padding-left: 21px; white-space: nowrap; letter-spacing: -.55px; }
.tree svg { width: 11px; height: 11px; margin-right: 2px; }
.tree .root { padding-left: 8px; }
.tree .root svg { width: 9px; height: 9px; margin-right: 4px; }
.tree .exp { padding-left: 12px; }
.tree .exp::before { content: ""; border: 2.5px solid transparent; border-left: 4px solid #777; border-right: 0; margin-right: 5px; }
.tree .gone { color: #cfd1d3; letter-spacing: -.6px; }
.tree .gone span { filter: blur(.6px); font-size: 8px; }
.tree span { line-height: 12px; }
.tree .sel span { background: #add9ed; margin-left: -1px; padding: 0 1px; }
.insert { height: 2px; margin: 4px 4px 0 5px; background: #88c97e; }

.view { position: relative; background: #e9eaee; border-bottom: 4px solid #e2e7e9; height: 556px; }
.scene { width: 1102px; height: 556px; }
.viewbar { position: absolute; left: 418px; top: 6px; display: flex; align-items: center; width: 267px; height: 20px; padding: 0 0 1px 1px; background: #fafbfc; border: 1px solid #bac2cb; }
.viewbar span { position: relative; display: flex; align-items: center; justify-content: center; width: 17.6px; height: 18px; }
.viewbar svg { width: 12px; height: 12px; }
.viewbar .more::after { content: ""; position: absolute; right: 0; bottom: 2px; border: 1px solid #666; }
.viewbar .down { background: #dfe1e5; border: 1px solid #bfc4c8; height: 16px; }

.status { display: grid; grid-template-columns: 64px 999px 36px 59px 109px; align-items: center; background: #f9fbfb; border-top: 1px solid #ccd3d4; }
.sicons { width: 60px; height: 24px; }
.message { letter-spacing: -.26px; padding-bottom: 1px; }
.finder { display: flex; align-items: center; justify-content: center; gap: 5px; width: 30px; height: 16px; margin-left: 4px; border: 1px solid #cfd3d4; border-left: 1px solid #aab0b2; }
.finder svg { width: 11px; height: 11px; }
.selected { padding-left: 2px; letter-spacing: -.38px; white-space: nowrap; }
.select { display: flex; align-items: center; justify-content: space-between; height: 15px; padding-left: 4px; border: 1px solid #b9c1c2; background: #fff; letter-spacing: -.28px; }
.drop { display: flex; align-items: center; justify-content: center; width: 11px; height: 11px; border-left: 1px solid #b9c1c2; }

.taskbar { position: relative; display: flex; align-items: center; background: linear-gradient(90deg, #3f1023 0, #3c1226 435px, #231b25 455px, #241c26 850px, #351124 950px, #36102c 1080px, #461119 1170px, #4a131b); color: #f1e8eb; padding-left: 440px; }
.start { width: 16px; height: 16px; }
.search { display: flex; align-items: center; width: 146px; height: 22px; margin-left: 9px; padding: 0 4px 0 7px; background: #423b44; border: 1px solid #50474f; border-radius: 11px; font-size: 9.5px; letter-spacing: -.3px; }
.search svg { width: 10px; height: 10px; margin-right: 6px; }
.search em { display: grid; place-items: center; width: 13px; height: 13px; margin-left: auto; border-radius: 50%; background: #e4f5fb; color: #1574b7; font: bold 11px/13px "Open Sans", sans-serif; }
.apps { display: flex; margin-left: 2px; }
.apps span { position: relative; display: grid; place-items: center; width: 29.2px; height: 28px; }
.apps svg { width: 17px; height: 17px; }
.chat b { position: absolute; top: 3px; right: 3px; width: 10px; height: 10px; border-radius: 50%; background: #f1775e; color: #4b1c1c; font-size: 7px; line-height: 10px; text-align: center; }
.run::after, .active::after { content: ""; position: absolute; bottom: 1px; width: 4px; height: 1.5px; background: #aaa; }
.active { background: #302a34; }
.active::after { width: 10px; background: #e4a1b0; }
.tray { width: 76px; height: 20px; margin-left: 285px; }
.clock { width: 44px; text-align: right; font-size: 8.5px; line-height: 10.5px; letter-spacing: -.32px; margin-left: -3px; }
.notify { width: 11px; height: 11px; border-radius: 50%; background: #f08778; color: #5c1f20; font-size: 7px; line-height: 11px; text-align: center; margin-left: 8px; letter-spacing: 0; }
.recorder { position: absolute; left: 0; top: 5px; width: 418px; height: 27px; overflow: hidden; border-right: 1px solid #80848f; }
.rtitle { display: flex; height: 16px; padding-left: 4px; border-top: 1px solid #777e91; background: linear-gradient(#5d6476, #33374a 55%, #171a24); color: #a5aab3; font: 9px/16px "Open Sans", sans-serif; letter-spacing: -.24px; }
.rtitle svg { width: 7px; height: 9px; margin: 3px 3px 0 0; }
.rtitle .x { width: 28px; height: 10px; margin: 0 2px 0 auto; }
.rbody { display: flex; height: 11px; padding: 6px 9px 0 5px; gap: 4px; background: #eeeff4; }
.rbody i { width: 49px; height: 12px; border: 1px solid #85878c; border-radius: 2px; background: #f9f9fb; }
.rbody .wide { width: 74px; margin-left: auto; }
```
